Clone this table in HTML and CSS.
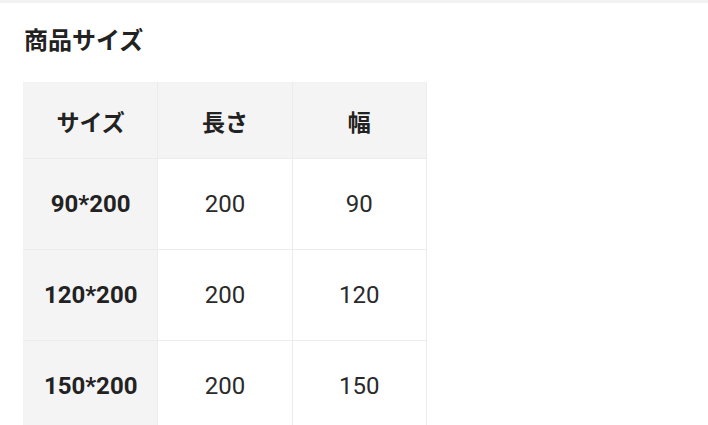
FILE: index.html
```html
<!DOCTYPE html>
<html lang="ja">
<head>
<meta charset="utf-8">
<link rel="stylesheet" href="styles.css">
</head>
<body>
<div class="topbar"></div>
<section class="spec">
  <h2 class="title">商品サイズ</h2>
  <table class="size-table">
    <thead>
      <tr><th class="head">サイズ</th><th class="head">長さ</th><th class="head">幅</th></tr>
    </thead>
    <tbody>
      <tr class="row"><th class="label">90*200</th><td>200</td><td>90</td></tr>
      <tr class="row"><th class="label">120*200</th><td>200</td><td>120</td></tr>
      <tr class="row"><th class="label">150*200</th><td>200</td><td>150</td></tr>
    </tbody>
  </table>
</section>
</body>
</html>
```
FILE: styles.css
```css
html, body {
  margin: 0;
  padding: 0;
  background: #ffffff;
  height: 100%;
  overflow: hidden;
}
body {
  font-family: Roboto, "Noto Sans CJK JP", sans-serif;
  color: #222222;
}
.topbar {
  height: 3px;
  background: #f2f2f2;
}
.spec {
  padding: 0 0 0 23px;
}
.title {
  margin: 0;
  padding-top: 24px;
  padding-left: 1px;
  height: 79px;
  box-sizing: border-box;
  font-size: 24px;
  line-height: 28px;
  font-weight: 700;
}
.size-table {
  border-collapse: collapse;
  table-layout: fixed;
  width: 404px;
}
.size-table th,
.size-table td {
  border: 1px solid #ececec;
  text-align: center;
  font-size: 24px;
  padding: 0;
}
.size-table .head {
  background: #f4f4f4;
  height: 75px;
  font-size: 23px;
  font-weight: 700;
  border-top-color: #f2f2f2;
}
.size-table .head:first-child {
  border-left-color: #f4f4f4;
}
.size-table .label {
  background: #f4f4f4;
  font-weight: 700;
  border-left-color: #f4f4f4;
}
.size-table td {
  font-weight: 400;
  color: #2a2a2a;
}
.row th, .row td {
  height: 90px;
}
```
